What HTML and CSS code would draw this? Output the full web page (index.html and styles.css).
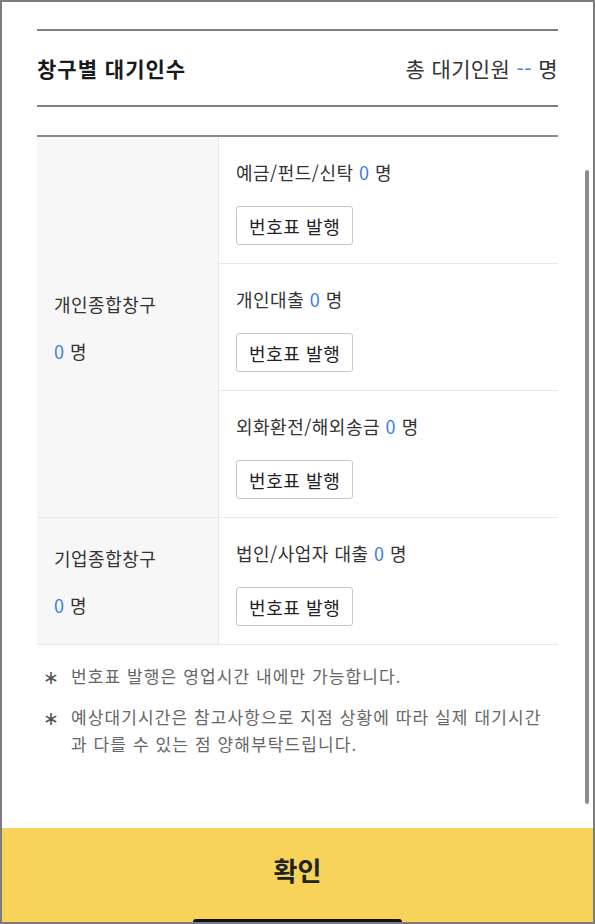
FILE: index.html
```html
<!DOCTYPE html>
<html lang="ko">
<head>
   <meta charset="UTF-8">
   <title>창구별 대기인수</title>
   <link rel="stylesheet" href="styles.css">
</head>
<body>
<div class="screen">
   <div class="content">
      <div class="summary">
         <h2 class="summary_title">창구별 대기인수</h2>
         <div class="summary_total">총 대기인원 <span class="num">--</span> 명</div>
      </div>

      <table class="queue">
         <tr>
            <th rowspan="3">
               <div class="group_name">개인종합창구</div>
               <div class="group_count"><span class="num">0</span> 명</div>
            </th>
            <td>
               <div class="window_name">예금/펀드/신탁 <span class="num">0</span> 명</div>
               <button class="ticket">번호표 발행</button>
            </td>
         </tr>
         <tr>
            <td>
               <div class="window_name">개인대출 <span class="num">0</span> 명</div>
               <button class="ticket">번호표 발행</button>
            </td>
         </tr>
         <tr>
            <td>
               <div class="window_name">외화환전/해외송금 <span class="num">0</span> 명</div>
               <button class="ticket">번호표 발행</button>
            </td>
         </tr>
         <tr>
            <th>
               <div class="group_name">기업종합창구</div>
               <div class="group_count"><span class="num">0</span> 명</div>
            </th>
            <td>
               <div class="window_name">법인/사업자 대출 <span class="num">0</span> 명</div>
               <button class="ticket">번호표 발행</button>
            </td>
         </tr>
      </table>

      <ul class="notes">
         <li><span class="mark">∗</span><span>번호표 발행은 영업시간 내에만 가능합니다.</span></li>
         <li><span class="mark">∗</span><span>예상대기시간은 참고사항으로 지점 상황에 따라 실제 대기시간과 다를 수 있는 점 양해부탁드립니다.</span></li>
      </ul>
   </div>

   <button class="confirm">확인</button>

   <div class="scrollbar"></div>
   <div class="home_bar"></div>
</div>
</body>
</html>
```

FILE: styles.css
```css
* {
   box-sizing: border-box;
}

body {
   margin: 0;
   font-family: "Noto Sans CJK KR", "Noto Sans", sans-serif;
   color: #333;
}

.screen {
   position: relative;
   display: flex;
   flex-direction: column;
   width: 595px;
   height: 924px;
   border: 2px solid #7c7c7c;
   overflow: hidden;
   background: #fff;
}

.content {
   flex: 1;
   padding: 27px 35px 0;
}

.num {
   color: #3b7de4;
}

/* summary */
.summary {
   display: flex;
   justify-content: space-between;
   align-items: center;
   height: 78px;
   border-top: 2px solid #7f7f7f;
   border-bottom: 2px solid #7f7f7f;
}

.summary_title {
   margin: 0;
   font-size: 21px;
   font-weight: bold;
   color: #1a1a1a;
   letter-spacing: 1px;
}

.summary_total {
   font-size: 21px;
   color: #333;
   letter-spacing: 0.4px;
}

/* table */
.queue {
   width: 100%;
   margin-top: 28px;
   border-spacing: 0;
   border-top: 2px solid #8a8a8a;
}

.queue th {
   width: 182px;
   padding: 0 17px;
   text-align: left;
   font-weight: normal;
   vertical-align: middle;
   background: #f7f7f7;
   border-right: 1px solid #e8e8e8;
   border-bottom: 1px solid #e8e8e8;
}

.queue td {
   padding: 21px 17px 18px;
   border-bottom: 1px solid #e8e8e8;
   vertical-align: top;
}

.group_name,
.group_count,
.window_name {
   font-size: 18px;
   line-height: 28px;
   color: #333;
   letter-spacing: 0.5px;
}

.group_count {
   margin-top: 19px;
}

.window_name {
   margin-bottom: 20px;
}

.ticket {
   display: block;
   height: 39px;
   padding: 0 12px;
   font-family: inherit;
   font-size: 18px;
   letter-spacing: 0.6px;
   color: #222;
   background: #fff;
   border: 1px solid #c8c8c8;
   border-radius: 3px;
}

/* notes */
.notes {
   margin: 17px 0 0;
   padding: 0;
   list-style: none;
}

.notes li {
   display: flex;
   font-size: 17px;
   line-height: 27px;
   color: #666;
   letter-spacing: 1.1px;
}

.notes li + li {
   margin-top: 14px;
}

.notes .mark {
   flex: none;
   width: 34px;
   padding-left: 6px;
   font-size: 19px;
   color: #555;
}

/* bottom */
.confirm {
   flex: none;
   height: 94px;
   padding: 0 0 12px;
   font-family: inherit;
   font-size: 26px;
   font-weight: bold;
   color: #222;
   background: #f7d35a;
   border: none;
}

.scrollbar {
   position: absolute;
   top: 168px;
   right: 4px;
   width: 4px;
   height: 634px;
   background: #8c8c8c;
   border-radius: 2px;
}

.home_bar {
   position: absolute;
   bottom: -3px;
   left: 191px;
   width: 209px;
   height: 6px;
   background: #111;
   border-radius: 3px;
}
```
